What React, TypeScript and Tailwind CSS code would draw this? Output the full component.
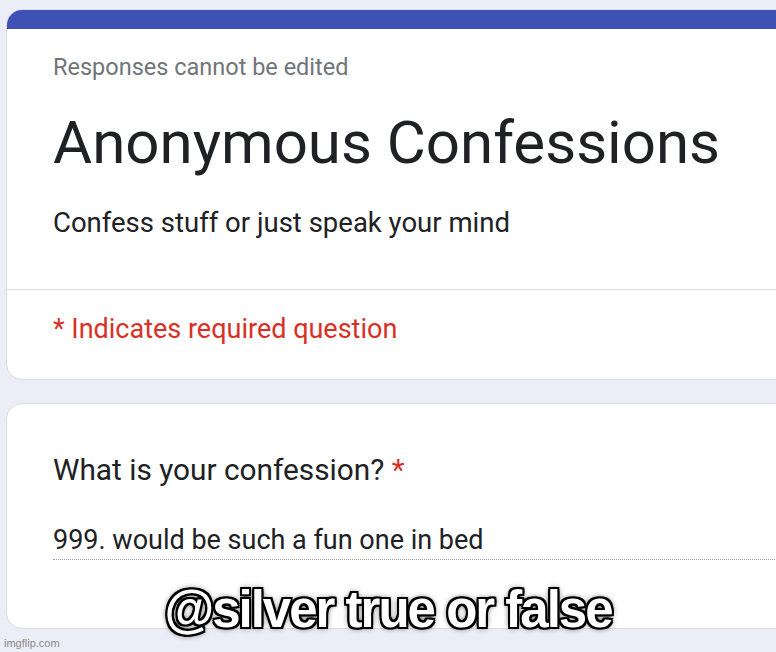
export default function App() {
  const roboto = { fontFamily: "Roboto, 'Noto Sans', Arial, sans-serif" };
  return (
    <div
      className="relative h-[652px] w-[776px] overflow-hidden bg-[#ebedf7] pl-[6px] pt-[9px]"
      style={roboto}
    >
      {/* header card */}
      <div className="w-[820px] overflow-hidden rounded-2xl border border-[#dadce0] bg-white">
        <div className="h-[19px] bg-[#3f51b5]" />
        <div className="px-[46px]">
          <div className="pt-[24px] text-[23.5px] leading-[28px] text-[#70757a]">
            Responses cannot be edited
          </div>
          <div className="mt-[28px] text-[60px] leading-[68px] text-[#202124]">
            Anonymous Confessions
          </div>
          <div className="mt-[30px] text-[27.5px] leading-[32px] text-[#202124]">
            Confess stuff or just speak your mind
          </div>
        </div>
        <div className="mt-[50px] border-t border-[#dadce0]" />
        <div className="px-[46px] pt-[23px] pb-[34px] text-[27px] leading-[32px] text-[#d93025]">
          * Indicates required question
        </div>
      </div>

      {/* question card */}
      <div className="mt-[23px] h-[226px] w-[820px] rounded-2xl border border-[#dadce0] bg-white px-[46px] pt-[50px]">
        <div className="text-[29.8px] leading-[32px] text-[#202124]">
          What is your confession? <span className="text-[#d93025]">*</span>
        </div>
        <div className="mt-[39px] border-b border-dotted border-[#9aa0a6] pb-[4px] text-[27px] leading-[30px] text-[#202124]">
          999. would be such a fun one in bed
        </div>
      </div>

      {/* meme caption */}
      <div
        className="absolute left-0 right-0 top-[582px] text-center text-[51px] leading-[56px] font-bold tracking-[-2px] text-white"
        style={{
          fontFamily: "Impact, 'Liberation Sans', Arial, sans-serif",
          textShadow:
            "2px 2px 0 #000, -2px -2px 0 #000, 2px -2px 0 #000, -2px 2px 0 #000, 0 2px 0 #000, 0 -2px 0 #000, 2px 0 0 #000, -2px 0 0 #000, 0 0 6px #000",
        }}
      >
        @silver true or false
      </div>

      <div
        className="absolute bottom-[2px] left-[4px] text-[11px] leading-[14px] text-[#8a8a8a]"
        style={{ fontFamily: "'Liberation Sans', Arial, sans-serif" }}
      >
        imgflip.com
      </div>
    </div>
  );
}
